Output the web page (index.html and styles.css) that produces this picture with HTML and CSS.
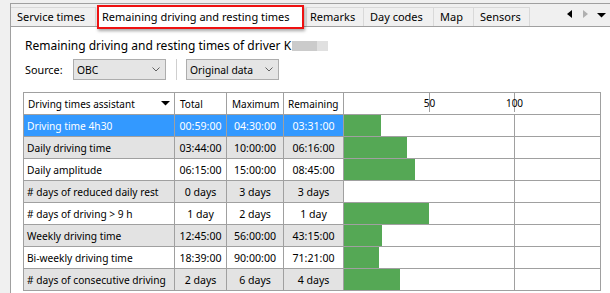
FILE: index.html
```html
<!DOCTYPE html>
<html>
<head>
<meta charset="utf-8">
<link rel="stylesheet" href="styles.css">
</head>
<body>
<div class="tabctl">
  <div class="strip">
    <div class="tab t-service">Service times</div>
    <div class="tab active">Remaining driving and resting times</div>
    <div class="tab t-remarks">Remarks</div>
    <div class="tab t-day">Day codes</div>
    <div class="tab t-map">Map</div>
    <div class="tab t-sensors">Sensors</div>
    <div class="nav">
      <svg class="nl" width="5" height="8" viewBox="0 0 5 8"><path d="M5 0 L5 8 L0 4 Z" fill="#000"/></svg>
      <svg class="nr" width="5" height="8" viewBox="0 0 5 8"><path d="M0 0 L0 8 L5 4 Z" fill="#b0b0b0"/></svg>
      <svg class="nd" width="9" height="5" viewBox="0 0 9 5"><path d="M0 0 L9 0 L4.5 4.5 Z" fill="#000"/></svg>
    </div>
  </div>
  <div class="panel">
    <div class="title">Remaining driving and resting times of driver K<span class="blur"></span></div>
    <div class="source">
      <span class="label">Source:</span>
      <div class="combo"><span>OBC</span><svg width="8" height="5" viewBox="0 0 8 5"><path d="M0.5 0.5 L4 4 L7.5 0.5" fill="none" stroke="#606060" stroke-width="1"/></svg></div>
      <div class="vsep"></div>
      <div class="combo"><span>Original data</span><svg width="8" height="5" viewBox="0 0 8 5"><path d="M0.5 0.5 L4 4 L7.5 0.5" fill="none" stroke="#606060" stroke-width="1"/></svg></div>
    </div>
    <table class="grid">
      <colgroup>
        <col class="c1"><col class="c2"><col class="c3"><col class="c4"><col class="c5">
      </colgroup>
      <thead>
        <tr>
          <th class="name"><div class="hname"><span>Driving times assistant</span><svg width="9" height="5" viewBox="0 0 9 5"><path d="M0 0 L9 0 L4.5 4.5 Z" fill="#000"/></svg></div></th>
          <th>Total</th>
          <th>Maximum</th>
          <th class="hrem">Remaining</th>
          <th class="chart"><div class="axis"><span class="tick t50">50</span><span class="tick t100">100</span></div></th>
        </tr>
      </thead>
      <tbody>
        <tr class="sel"><td class="name">Driving time 4h30</td><td>00:59:00</td><td>04:30:00</td><td>03:31:00</td><td class="chart"><div class="track"><div class="bar" style="width:37px"></div></div></td></tr>
        <tr class="alt"><td class="name">Daily driving time</td><td>03:44:00</td><td>10:00:00</td><td>06:16:00</td><td class="chart"><div class="track"><div class="bar" style="width:63px"></div></div></td></tr>
        <tr><td class="name">Daily amplitude</td><td>06:15:00</td><td>15:00:00</td><td>08:45:00</td><td class="chart"><div class="track"><div class="bar" style="width:71px"></div></div></td></tr>
        <tr class="alt"><td class="name"># days of reduced daily rest</td><td>0 days</td><td>3 days</td><td>3 days</td><td class="chart"><div class="track"><div class="bar" style="width:0px"></div></div></td></tr>
        <tr><td class="name"># days of driving &gt; 9 h</td><td>1 day</td><td>2 days</td><td>1 day</td><td class="chart"><div class="track"><div class="bar" style="width:85px"></div></div></td></tr>
        <tr class="alt"><td class="name">Weekly driving time</td><td>12:45:00</td><td>56:00:00</td><td>43:15:00</td><td class="chart"><div class="track"><div class="bar" style="width:38px"></div></div></td></tr>
        <tr><td class="name">Bi-weekly driving time</td><td>18:39:00</td><td>90:00:00</td><td>71:21:00</td><td class="chart"><div class="track"><div class="bar" style="width:35px"></div></div></td></tr>
        <tr class="alt"><td class="name"># days of consecutive driving</td><td>2 days</td><td>6 days</td><td>4 days</td><td class="chart"><div class="track"><div class="bar" style="width:56px"></div></div></td></tr>
      </tbody>
    </table>
  </div>
</div>
</body>
</html>
```
FILE: styles.css
```css
html, body {
  margin: 0;
  padding: 0;
  background: #f0f0f0;
  width: 610px;
  height: 293px;
  overflow: hidden;
  font-family: "Noto Sans", "Open Sans", sans-serif;
  font-size: 11px;
  color: #000;
}
.tabctl {
  margin: 3px 0 0 10px;
  border-top: 1px solid #a0a0a0;
  border-left: 1px solid #a0a0a0;
  height: 289px;
  display: flex;
  flex-direction: column;
}
.strip {
  height: 22px;
  border-bottom: 1px solid #a0a0a0;
  display: flex;
  align-items: flex-end;
}
.tab {
  box-sizing: border-box;
  height: 19px;
  line-height: 18px;
  border: 1px solid #d9d9d9;
  border-bottom: none;
  padding: 0 0 0 6px;
  margin-right: -1px;
  white-space: nowrap;
  background: #f0f0f0;
}
.t-service {
  border-left: none;
  width: 85px;
  padding-left: 6px;
  margin-right: 0;
}
.t-remarks { width: 58px; padding-left: 3px; }
.t-day { width: 71px; }
.t-map { width: 41px; }
.t-sensors { width: 57px; }
.tab.active {
  position: relative;
  z-index: 2;
  width: 207px;
  height: 24px;
  line-height: 20px;
  margin: 0 2px -3px 1px;
  border: 2px solid #ee1111;
  background: #fff;
  padding: 0 0 0 3px;
  box-shadow: 1px 2px 3px rgba(0,0,0,0.35);
}
.nav {
  margin-left: auto;
  align-self: stretch;
  display: flex;
  align-items: center;
  padding-right: 4px;
}
.nav svg { display: block; }
.nl { margin-top: -3px; }
.nr { margin: -3px 0 0 11px; }
.nd { margin: 0 0 0 9px; }
.panel {
  flex: 1;
  background: #fff;
  padding: 11px 0 0 14px;
}
.title {
  height: 16px;
  line-height: 16px;
  font-size: 12px;
  white-space: nowrap;
}
.blur {
  display: inline-block;
  width: 36px;
  height: 10px;
  margin-left: 1px;
  vertical-align: -1px;
  background: linear-gradient(to right, #cbcbcb 0 25px, #e0e0e0 25px);
}
.source {
  margin-top: 5px;
  display: flex;
  align-items: center;
  height: 21px;
  font-size: 10.8px;
}
.label {
  width: 48px;
}
.combo {
  box-sizing: border-box;
  width: 93px;
  height: 21px;
  border: 1px solid #adadad;
  background: #e5e5e5;
  display: flex;
  align-items: center;
  justify-content: space-between;
  padding: 0 5px 0 3px;
  font-size: 10.3px;
}
.combo svg { display: block; }
.vsep {
  width: 1px;
  height: 21px;
  background: #cfcfcf;
  margin: 0 9px 0 10px;
}
.grid {
  margin: 12px 0 0 -2px;
  border-collapse: collapse;
  table-layout: fixed;
  width: 578px;
  font-size: 10px;
}
.c1 { width: 151px; }
.c2 { width: 52px; }
.c3 { width: 57px; }
.c4 { width: 60px; }
.c5 { width: 257px; }
.grid th, .grid td {
  border: 1px solid #a0a0a0;
  height: 21px;
  padding: 0;
  white-space: nowrap;
  text-align: center;
  font-weight: normal;
  box-sizing: border-box;
  overflow: hidden;
}
.grid td {
  font-size: 10.6px;
}
.grid th {
  text-align: left;
  padding-left: 5px;
  background: #fff;
}
.grid th.hrem { padding-left: 4px; }
.grid th.name { padding-left: 4px; }
.grid td.name {
  text-align: left;
  padding-left: 3px;
  font-size: 10.2px;
}
.hname {
  display: flex;
  align-items: center;
  justify-content: space-between;
  padding-right: 4px;
}
.hname svg { display: block; }
.grid tr.sel td {
  background: #3399ff;
  color: #fff;
}
.grid tr.alt td {
  background: #e3e3e3;
}
.grid td.chart, .grid tr.sel td.chart, .grid tr.alt td.chart, .grid th.chart {
  background: #fff;
  padding: 0;
}
.track {
  height: 21px;
  background: linear-gradient(to right, transparent 170px, #a0a0a0 170px 171px, transparent 171px);
}
.bar {
  height: 100%;
  background: #55a855;
}
.axis {
  position: relative;
  height: 21px;
}
.tick {
  position: absolute;
  top: 0;
  height: 19px;
  line-height: 20px;
  transform: translateX(-50%);
  background: linear-gradient(to right, transparent calc(50% - 0.5px), #a0a0a0 calc(50% - 0.5px) calc(50% + 0.5px), transparent calc(50% + 0.5px));
}
.t50 { left: 85.5px; }
.t100 { left: 170.5px; }
```
